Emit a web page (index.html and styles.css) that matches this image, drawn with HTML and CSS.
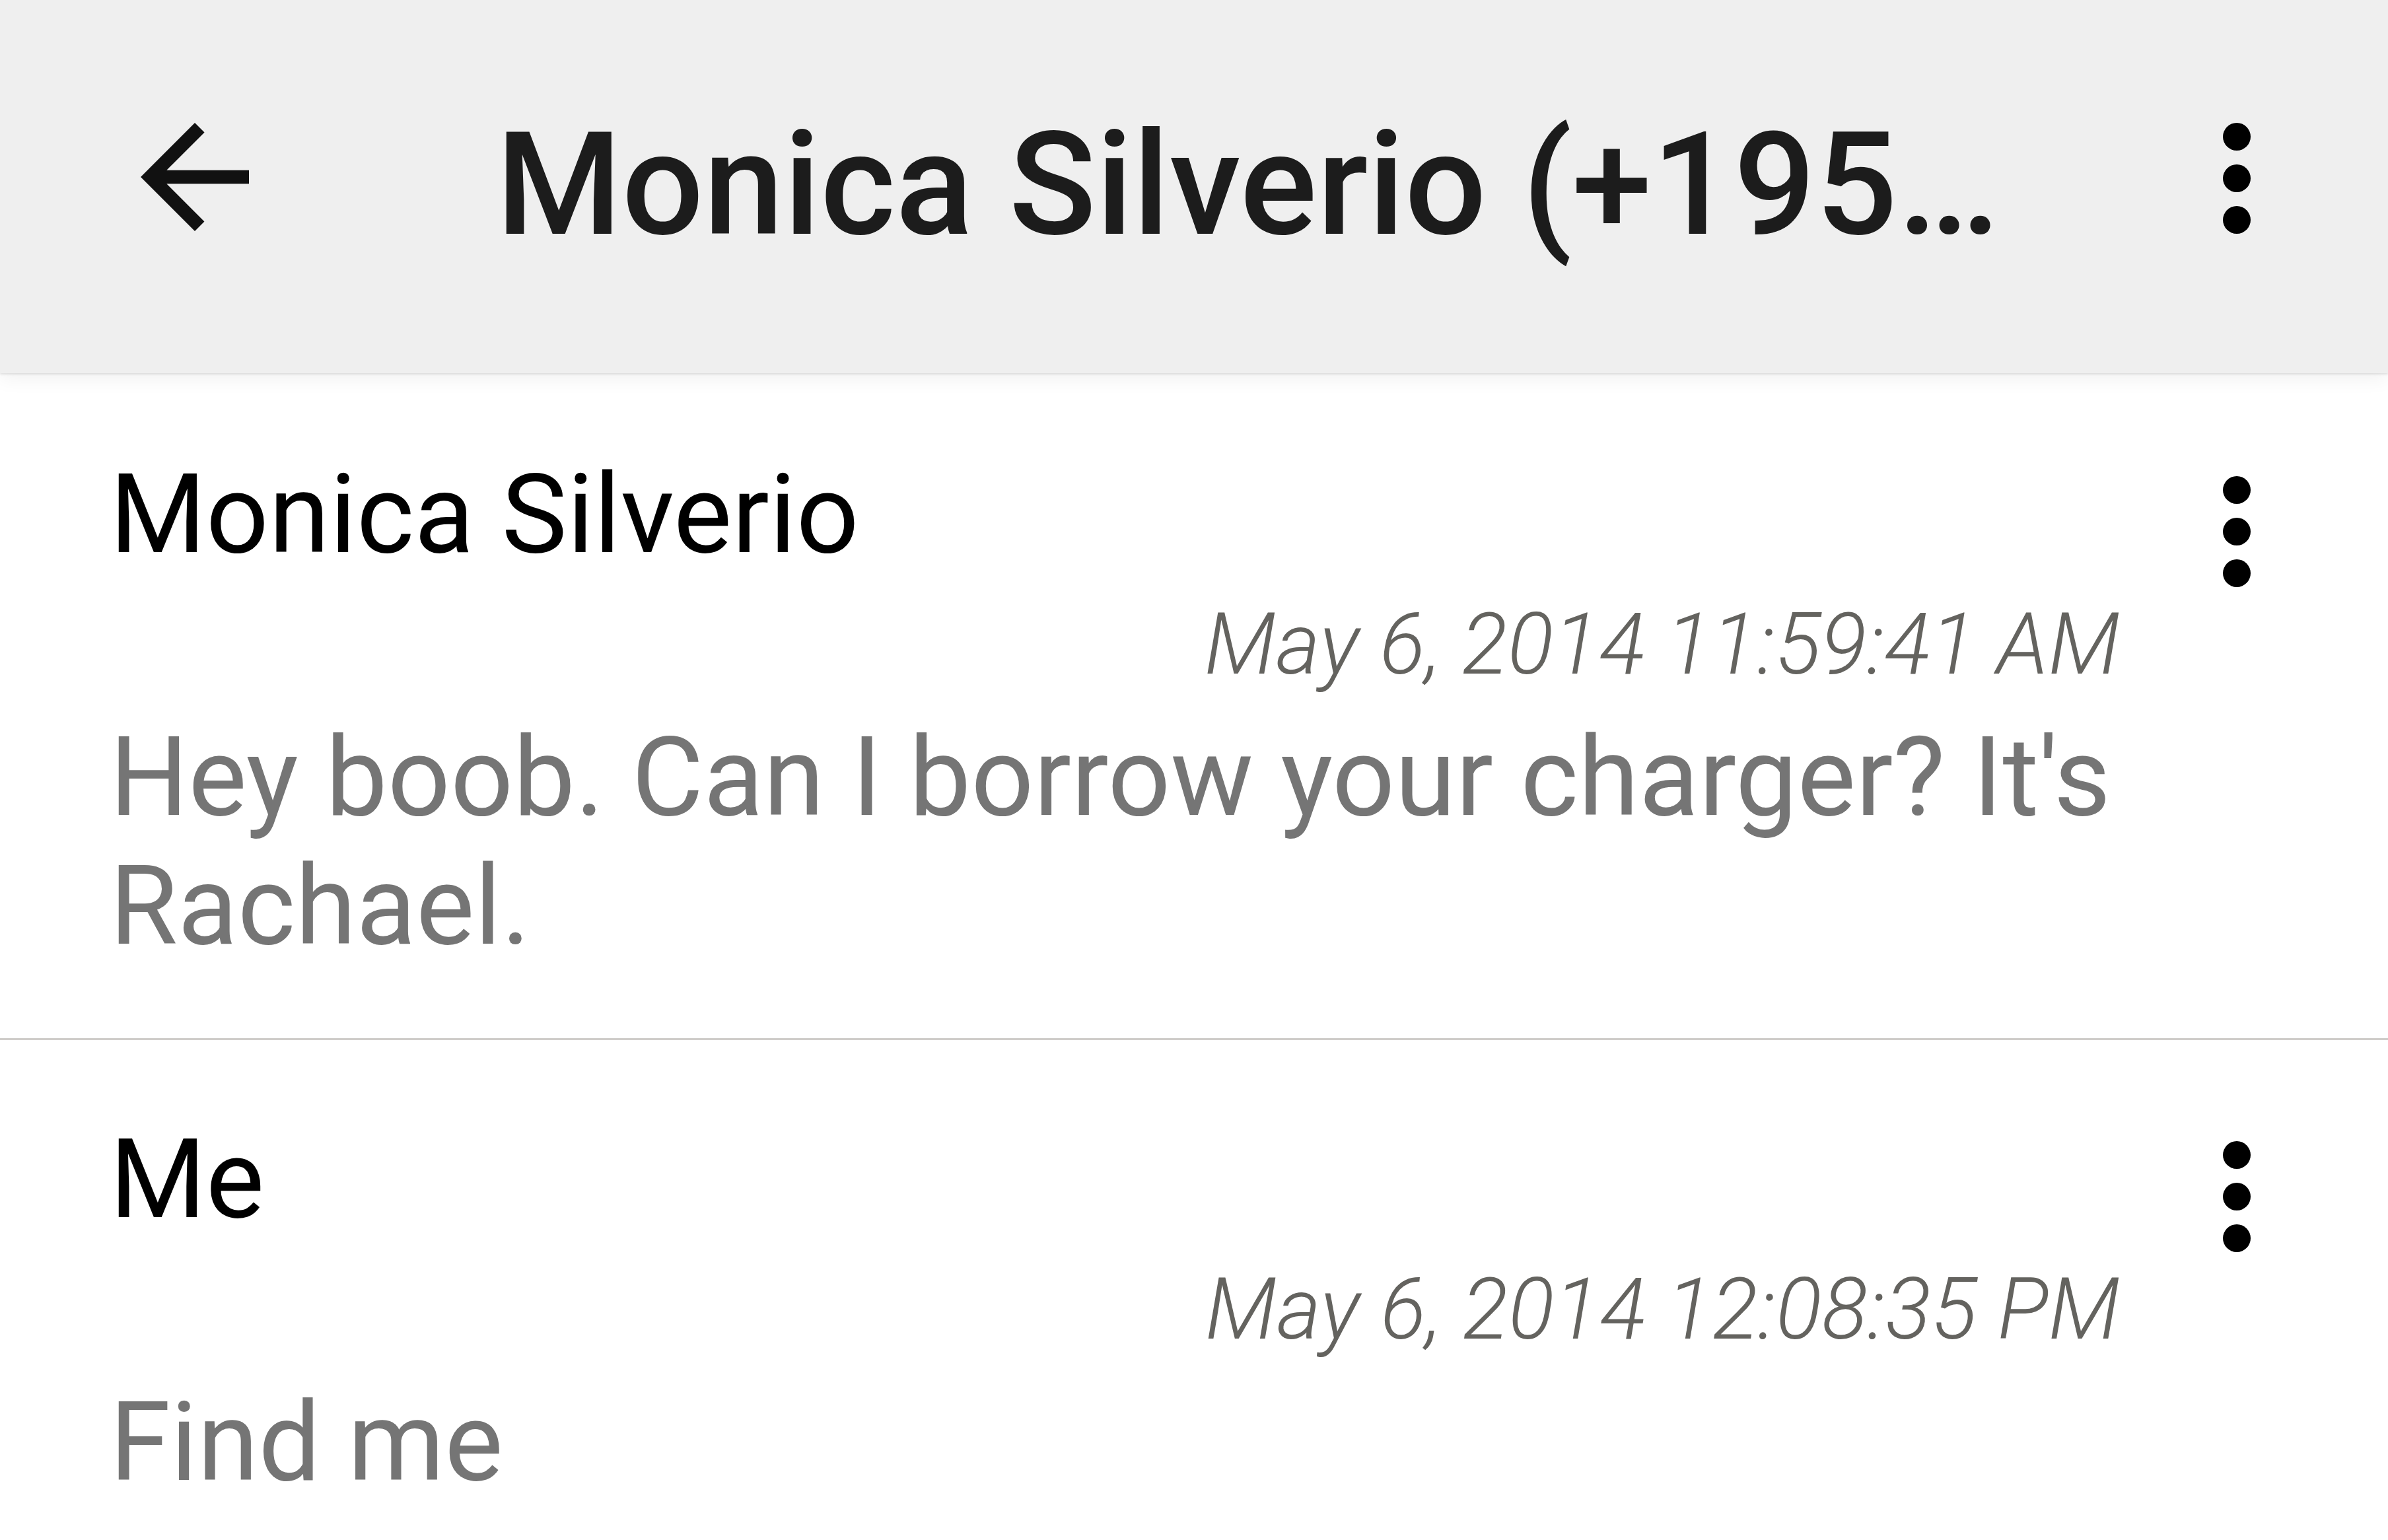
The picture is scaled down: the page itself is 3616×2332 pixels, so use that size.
FILE: index.html
```html
<!DOCTYPE html>
<html lang="en">
<head>
<meta charset="utf-8">
<title>Monica Silverio</title>
<link rel="stylesheet" href="styles.css">
</head>
<body>
<div class="screen">
  <header class="toolbar">
    <svg class="back" viewBox="0 0 24 24"><path d="M20 11H7.83l5.59-5.59L12 4l-8 8 8 8 1.41-1.41L7.83 13H20v-2z"/></svg>
    <div class="title">Monica Silverio (+195…</div>
    <svg class="more top-more" viewBox="0 0 24 24"><circle cx="12" cy="6" r="2"/><circle cx="12" cy="12" r="2"/><circle cx="12" cy="18" r="2"/></svg>
  </header>
  <main class="list">
    <section class="msg">
      <div class="msg-body">
        <div class="sender">Monica Silverio</div>
        <div class="time">May 6, 2014 11:59:41 AM</div>
        <div class="text">Hey boob. Can I borrow your charger? It's Rachael.</div>
      </div>
      <svg class="more" viewBox="0 0 24 24"><circle cx="12" cy="6" r="2"/><circle cx="12" cy="12" r="2"/><circle cx="12" cy="18" r="2"/></svg>
    </section>
    <section class="msg">
      <div class="msg-body">
        <div class="sender">Me</div>
        <div class="time">May 6, 2014 12:08:35 PM</div>
        <div class="text">Find me</div>
      </div>
      <svg class="more" viewBox="0 0 24 24"><circle cx="12" cy="6" r="2"/><circle cx="12" cy="12" r="2"/><circle cx="12" cy="18" r="2"/></svg>
    </section>
  </main>
</div>
</body>
</html>
```
FILE: styles.css
```css
html, body {
  margin: 0;
  padding: 0;
  background: #ffffff;
}
body {
  font-family: Roboto, "Liberation Sans", sans-serif;
}
.screen {
  width: 3616px;
  height: 2332px;
  overflow: hidden;
  display: flex;
  flex-direction: column;
}
.toolbar {
  position: relative;
  z-index: 2;
  flex: 0 0 auto;
  box-sizing: border-box;
  height: 565px;
  display: flex;
  align-items: flex-start;
  padding: 0 103px 0 172px;
  background: #efefef;
  box-shadow: 0 2px 3px rgba(0, 0, 0, 0.10), 0 8px 28px rgba(0, 0, 0, 0.06);
}
.back {
  width: 246px;
  height: 246px;
  margin-top: 145px;
  fill: #111111;
  flex: 0 0 auto;
}
.title {
  flex: 1 1 auto;
  margin-top: 152px;
  margin-left: 333px;
  font-size: 218px;
  line-height: 256px;
  font-weight: 500;
  color: #1c1c1c;
  white-space: nowrap;
}
.more {
  width: 252px;
  height: 252px;
  fill: #000000;
  flex: 0 0 auto;
}
.top-more {
  margin-top: 144px;
}
.list {
  flex: 1 1 auto;
  background: #ffffff;
}
.msg {
  display: flex;
  align-items: flex-start;
  padding: 114px 103px 102px 166px;
}
.msg + .msg {
  border-top: 3px solid #cfcdca;
  padding-top: 111px;
}
.msg-body {
  flex: 1 1 auto;
  display: flex;
  flex-direction: column;
}
.sender {
  font-size: 167px;
  line-height: 200px;
  color: #000000;
}
.time {
  margin-top: 22px;
  margin-right: 51px;
  align-self: flex-end;
  font-size: 129px;
  line-height: 150px;
  font-style: italic;
  font-weight: 300;
  color: #64635f;
}
.text {
  margin-top: 29px;
  font-size: 167px;
  line-height: 195px;
  color: #757575;
}
```
